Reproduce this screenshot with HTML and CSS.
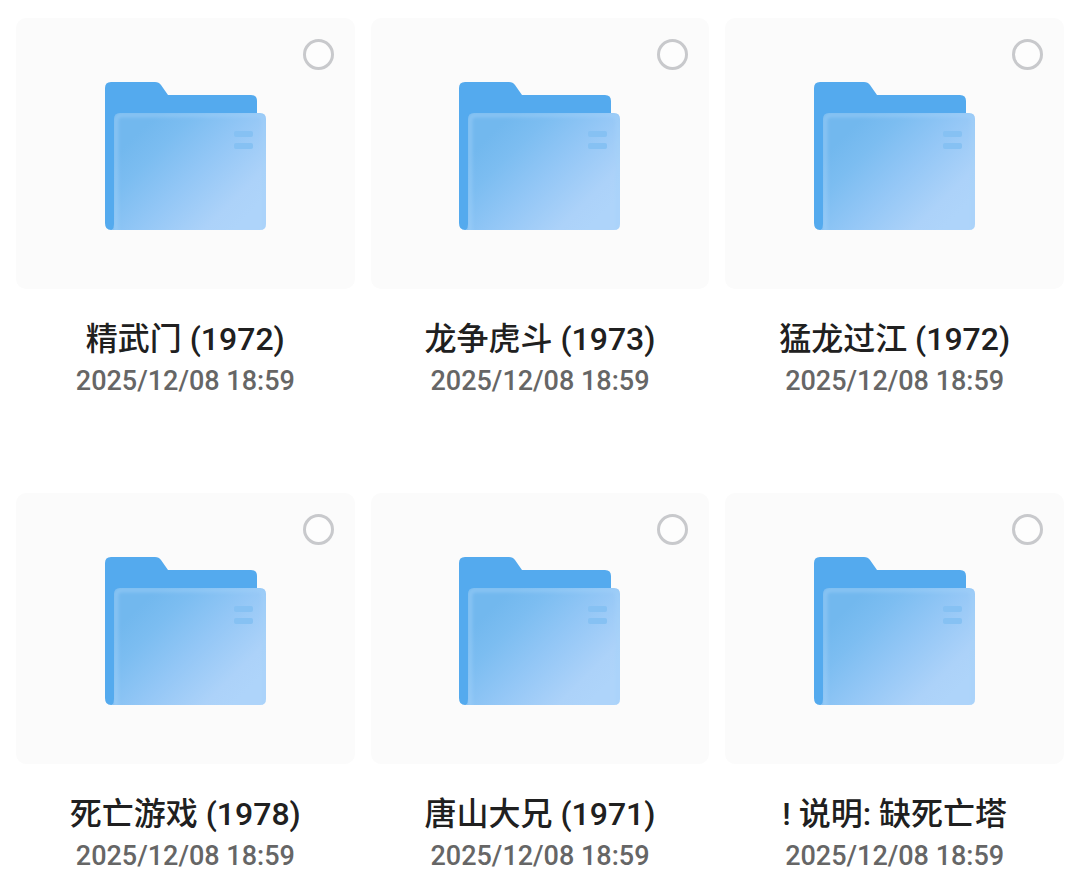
FILE: index.html
```
<!DOCTYPE html>
<html lang="zh-CN">
<head>
<meta charset="utf-8">
<meta name="viewport" content="width=device-width, initial-scale=1">
<title>文件夹</title>
<link rel="stylesheet" href="styles.css">
</head>
<body>
<svg class="defs" aria-hidden="true">
  <defs>
    <linearGradient id="front" gradientUnits="userSpaceOnUse" x1="42" y1="42" x2="138" y2="138">
      <stop offset="0" stop-color="#72b8ee"/>
      <stop offset="0.2" stop-color="#7cbdf1"/>
      <stop offset="0.52" stop-color="#94c7f6"/>
      <stop offset="0.85" stop-color="#acd2f9"/>
      <stop offset="1" stop-color="#aed4fa"/>
    </linearGradient>
    <filter id="soft" x="-10%" y="-10%" width="120%" height="120%"><feGaussianBlur stdDeviation="1.5"/></filter>
    <clipPath id="panel"><path d="M15 31H155Q161 31 161 37V142Q161 148 155 148H9V37Q9 31 15 31Z"/></clipPath>
    <symbol id="folder" viewBox="0 0 161 148">
      <path fill="#54aaee" d="M6 0H50Q54 0 56 3L63 13H146Q152 13 152 19V60L12 146Q10 148 6 148Q0 148 0 141V6Q0 0 6 0Z"/>
      <path d="M15 31H155Q161 31 161 37V142Q161 148 155 148H7Q9 146 9 142V37Q9 31 15 31Z" fill="url(#front)"/>
      <g clip-path="url(#panel)">
        <path d="M11 160V39Q11 33 17 33H153Q159 33 159 39V160" fill="none" stroke="#a6d3fa" stroke-opacity="0.4" stroke-width="5" filter="url(#soft)"/>
      </g>
      <rect x="129" y="49" width="19" height="6" rx="2" fill="#86c1f3"/>
      <rect x="129" y="61" width="19" height="6" rx="2" fill="#86c1f3"/>
    </symbol>
  </defs>
</svg>
<main class="grid">
  <article class="item">
    <div class="card"><svg class="folder" aria-hidden="true"><use href="#folder"/></svg><input class="pick" type="checkbox" aria-labelledby="n1"></div>
    <h2 class="name" id="n1">精武门 (1972)</h2>
    <time class="date" datetime="2025-12-08T18:59">2025/12/08 18:59</time>
  </article>
  <article class="item">
    <div class="card"><svg class="folder" aria-hidden="true"><use href="#folder"/></svg><input class="pick" type="checkbox" aria-labelledby="n2"></div>
    <h2 class="name" id="n2">龙争虎斗 (1973)</h2>
    <time class="date" datetime="2025-12-08T18:59">2025/12/08 18:59</time>
  </article>
  <article class="item">
    <div class="card"><svg class="folder" aria-hidden="true"><use href="#folder"/></svg><input class="pick" type="checkbox" aria-labelledby="n3"></div>
    <h2 class="name" id="n3">猛龙过江 (1972)</h2>
    <time class="date" datetime="2025-12-08T18:59">2025/12/08 18:59</time>
  </article>
  <article class="item">
    <div class="card"><svg class="folder" aria-hidden="true"><use href="#folder"/></svg><input class="pick" type="checkbox" aria-labelledby="n4"></div>
    <h2 class="name" id="n4">死亡游戏 (1978)</h2>
    <time class="date" datetime="2025-12-08T18:59">2025/12/08 18:59</time>
  </article>
  <article class="item">
    <div class="card"><svg class="folder" aria-hidden="true"><use href="#folder"/></svg><input class="pick" type="checkbox" aria-labelledby="n5"></div>
    <h2 class="name" id="n5">唐山大兄 (1971)</h2>
    <time class="date" datetime="2025-12-08T18:59">2025/12/08 18:59</time>
  </article>
  <article class="item">
    <div class="card"><svg class="folder" aria-hidden="true"><use href="#folder"/></svg><input class="pick" type="checkbox" aria-labelledby="n6"></div>
    <h2 class="name" id="n6">! 说明: 缺死亡塔</h2>
    <time class="date" datetime="2025-12-08T18:59">2025/12/08 18:59</time>
  </article>
</main>
</body>
</html>
```
FILE: styles.css
```
* {
  box-sizing: border-box;
}

body {
  margin: 0;
  background: #fff;
  font-family: Roboto, "Noto Sans CJK SC", sans-serif;
}

.defs {
  position: absolute;
  width: 0;
  height: 0;
}

.grid {
  display: grid;
  grid-template-columns: repeat(3, minmax(0, 1fr));
  gap: 92px 16px;
  padding: 18px 16px 0;
}

.item {
  display: flex;
  flex-direction: column;
  align-items: center;
}

.card {
  position: relative;
  display: flex;
  align-items: center;
  justify-content: center;
  width: 100%;
  aspect-ratio: 5 / 4;
  padding-top: 5px;
  border-radius: 10px;
  background: #fbfbfb;
}

.folder {
  width: 161px;
  height: 148px;
}

.pick {
  appearance: none;
  position: absolute;
  top: 21px;
  right: 21px;
  width: 31px;
  height: 31px;
  margin: 0;
  border: 3px solid #c8c9cc;
  border-radius: 50%;
  background: #fdfdfd;
}

.pick:checked {
  border-color: #54aaee;
  background: #54aaee;
}

.name {
  margin: 28px 0 0;
  color: #202020;
  font-size: 32px;
  font-weight: 500;
  line-height: 44px;
}

.date {
  color: #666;
  font-size: 27px;
  font-weight: 500;
  line-height: 40px;
}
```
